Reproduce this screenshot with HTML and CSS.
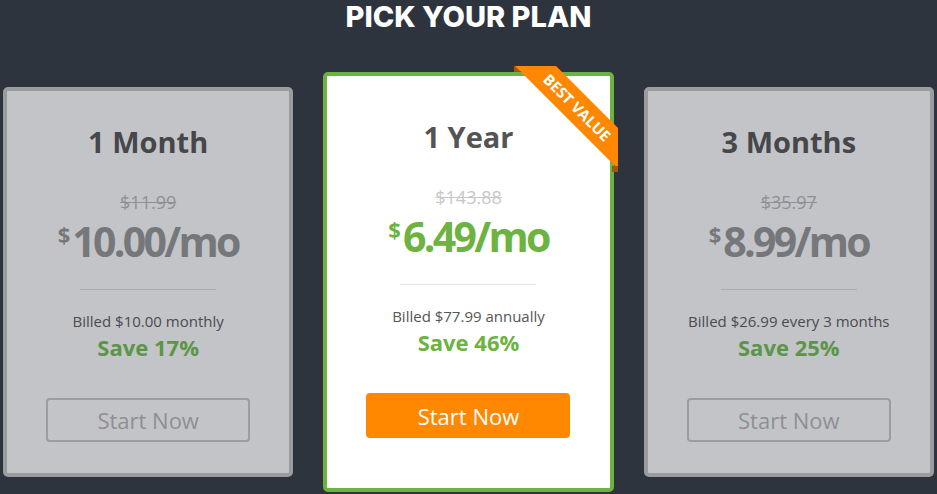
FILE: index.html
```html
<!DOCTYPE html>
<html lang="en">
<head>
<meta charset="utf-8">
<title>Pick your plan</title>
<link rel="stylesheet" href="styles.css">
</head>
<body>
<h1 class="heading">PICK YOUR PLAN</h1>
<div class="plans">
  <div class="plan plan--muted">
    <div class="plan__name">1 Month</div>
    <div class="plan__old">$11.99</div>
    <div class="plan__price"><span class="plan__cur">$</span>10.00/mo</div>
    <div class="plan__rule"></div>
    <div class="plan__billed">Billed $10.00 monthly</div>
    <div class="plan__save">Save 17%</div>
    <button class="plan__btn">Start Now</button>
  </div>
  <div class="plan plan--best">
    <div class="ribbon"><span class="ribbon__band">Best Value</span></div>
    <div class="plan__name">1 Year</div>
    <div class="plan__old">$143.88</div>
    <div class="plan__price"><span class="plan__cur">$</span>6.49/mo</div>
    <div class="plan__rule"></div>
    <div class="plan__billed">Billed $77.99 annually</div>
    <div class="plan__save">Save 46%</div>
    <button class="plan__btn">Start Now</button>
  </div>
  <div class="plan plan--muted">
    <div class="plan__name">3 Months</div>
    <div class="plan__old">$35.97</div>
    <div class="plan__price"><span class="plan__cur">$</span>8.99/mo</div>
    <div class="plan__rule"></div>
    <div class="plan__billed">Billed $26.99 every 3 months</div>
    <div class="plan__save">Save 25%</div>
    <button class="plan__btn">Start Now</button>
  </div>
</div>
</body>
</html>
```

FILE: styles.css
```css
html, body {
  margin: 0;
  padding: 0;
}
body {
  background: #2e343e;
  font-family: "Open Sans", "Liberation Sans", sans-serif;
  width: 937px;
  height: 494px;
  overflow: hidden;
}
.heading {
  margin: 0 0 39px;
  padding: 0;
  font-family: Inter, "Open Sans", sans-serif;
  font-weight: 800;
  font-size: 29px;
  line-height: 33px;
  color: #ffffff;
  text-align: center;
}
.plans {
  display: flex;
  align-items: center;
  gap: 30px;
  padding: 0 3px;
}
.plan {
  position: relative;
  flex: 1 1 0;
  box-sizing: border-box;
  display: flex;
  flex-direction: column;
  align-items: center;
  text-align: center;
  border-radius: 5px;
}
.plan--muted {
  background: #c3c4c8;
  border: 4px solid #9b9ca0;
  padding: 33px 0 31px;
}
.plan--best {
  background: #ffffff;
  border: 4px solid #6cb33f;
  padding: 43px 0 50px;
}
.plan__name {
  font-weight: 700;
  font-size: 29px;
  line-height: 36px;
}
.plan--muted .plan__name { color: #46474b; }
.plan--best .plan__name { color: #545454; }
.plan__old {
  margin-top: 30px;
  font-size: 18px;
  line-height: 24px;
  text-decoration: line-through;
}
.plan--muted .plan__old { color: #8f9094; }
.plan--best .plan__old { color: #c8c8c8; }
.plan__price {
  margin-top: 3px;
  font-weight: 700;
  font-size: 41px;
  line-height: 48px;
  letter-spacing: -2.7px;
}
.plan--muted .plan__price { color: #76777b; }
.plan--best .plan__price { color: #6cb33f; }
.plan__cur {
  font-size: 22px;
  line-height: 20px;
  vertical-align: 14px;
  letter-spacing: 0;
  margin-right: 2px;
}
.plan__rule {
  margin-top: 24px;
  width: 136px;
  height: 1px;
}
.plan--muted .plan__rule { background: #aaabaf; }
.plan--best .plan__rule { background: #e3e3e3; }
.plan__billed {
  margin-top: 21px;
  font-size: 15px;
  line-height: 20px;
}
.plan--muted .plan__billed { color: #4a4b4f; }
.plan--best .plan__billed { color: #555555; }
.plan__save {
  margin-top: 2px;
  font-weight: 700;
  font-size: 22px;
  line-height: 28px;
}
.plan--muted .plan__save { color: #5b9547; }
.plan--best .plan__save { color: #6cb33f; }
.plan__btn {
  margin-top: 37px;
  box-sizing: border-box;
  width: 204px;
  height: 44px;
  border-radius: 4px;
  font-family: "Open Sans", "Liberation Sans", sans-serif;
  font-size: 22px;
  line-height: 1;
  padding: 0;
  cursor: pointer;
}
.plan--muted .plan__btn {
  background: transparent;
  border: 2px solid #9b9ca0;
  color: #8e8f93;
}
.plan--best .plan__btn {
  height: 45px;
  background: #ff8800;
  border: none;
  color: #ffffff;
}
.ribbon {
  position: absolute;
  top: -10px;
  right: -8px;
  width: 104px;
  height: 106px;
  overflow: hidden;
}
.ribbon::before,
.ribbon::after {
  content: "";
  position: absolute;
  width: 6px;
  height: 6px;
  background: #a0560c;
}
.ribbon::before {
  left: 0;
  top: 0;
}
.ribbon::after {
  right: 0;
  bottom: 0;
}
.ribbon__band {
  position: absolute;
  left: -11.5px;
  top: 26.5px;
  width: 150px;
  height: 29px;
  line-height: 29px;
  background: #ff8800;
  color: #ffffff;
  font-weight: 700;
  font-size: 15px;
  text-transform: uppercase;
  text-align: center;
  transform: rotate(45deg);
}
```
